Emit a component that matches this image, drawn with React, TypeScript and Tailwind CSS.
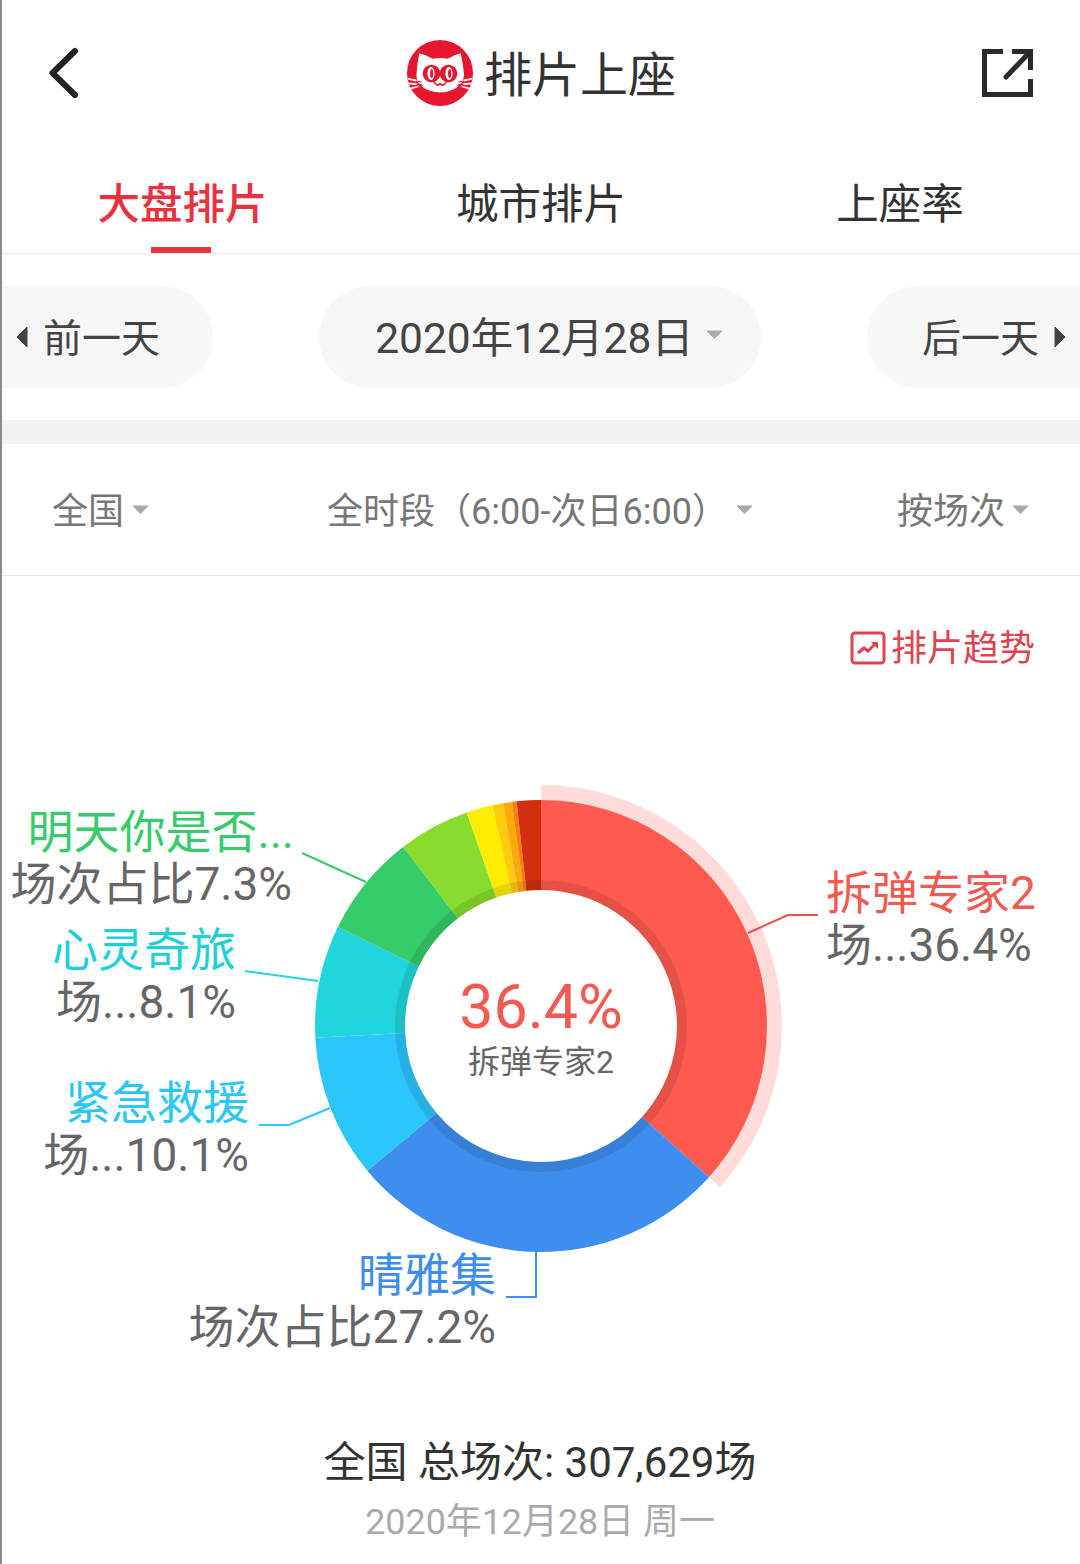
import React from 'react';

const CX = 541;
const CY = 1026;

// share of the ring per film, in degrees from 12 o'clock going clockwise
const segments = [
  { from: 0, to: 132, color: '#ff5a50' },
  { from: 132, to: 230.2, color: '#3e8ef0' },
  { from: 230.2, to: 267, color: '#2ac6fc' },
  { from: 267, to: 296, color: '#20d6dc' },
  { from: 296, to: 322.4, color: '#36cc69' },
  { from: 322.4, to: 340.8, color: '#88dc2c' },
  { from: 340.8, to: 347.6, color: '#ffec00' },
  { from: 347.6, to: 350.3, color: '#ffcb0c' },
  { from: 350.3, to: 352.6, color: '#ffa90a' },
  { from: 352.6, to: 353.8, color: '#fb7f0a' },
  { from: 353.8, to: 360, color: '#d12f0e' },
];

const point = (r: number, deg: number) => {
  const a = (deg * Math.PI) / 180;
  return `${(CX + r * Math.sin(a)).toFixed(2)} ${(CY - r * Math.cos(a)).toFixed(2)}`;
};

const arc = (r0: number, r1: number, from: number, to: number) => {
  const large = to - from > 180 ? 1 : 0;
  return `M${point(r1, from)} A${r1} ${r1} 0 ${large} 1 ${point(r1, to)} L${point(r0, to)} A${r0} ${r0} 0 ${large} 0 ${point(r0, from)} Z`;
};

const Caret = ({ className }: { className: string }) => (
  <svg viewBox="0 0 17 9" className={className}>
    <path d="M1 1h15L8.5 8.5z" fill="currentColor" stroke="currentColor" strokeLinejoin="round" />
  </svg>
);

const CatLogo = () => (
  <svg viewBox="0 0 66 66" className="mb-[3px] h-[66px] w-[66px] shrink-0">
    <circle cx="33" cy="33" r="33" fill="#e8152e" />
    <path d="M12.3 13.3 Q20 15 25.7 18.7 Q33 17.5 40.7 18.7 Q46 15 53.7 13.3 Q56 24 57 34 Q57 41 52 46 Q44 52 33.3 52.5 Q22 52 14 46 Q9 41 9.5 34 Q10 24 12.3 13.3Z" fill="#fff" />
    <circle cx="24.5" cy="33.5" r="8.8" fill="#e8152e" />
    <circle cx="41.5" cy="33.5" r="8.8" fill="#e8152e" />
    <ellipse cx="24" cy="33.5" rx="3.6" ry="6.4" fill="#fff" />
    <ellipse cx="42" cy="33.5" rx="3.6" ry="6.4" fill="#fff" />
    <ellipse cx="24.6" cy="33.5" rx="1.5" ry="4.6" fill="#e8152e" />
    <ellipse cx="42.6" cy="33.5" rx="1.5" ry="4.6" fill="#e8152e" />
    <path d="M27 41.5 Q29.5 47.5 33 43.5 Q36.5 47.5 39.5 41.5" fill="none" stroke="#e8152e" strokeWidth="1.6" />
    <path d="M0.7 38.7 L11 41 M1.3 43.3 L11 44.3 M3.3 48.7 L13 46 M65.3 38.7 L55 41 M64.7 43.3 L55 44.3 M62.7 48.7 L53 46" stroke="#fff" strokeWidth="1.8" />
    <path d="M9 41 L14.5 42 M9.5 44.4 L14.5 44.6 M11 46.5 L15.5 45.3 M57 41 L51.5 42 M56.5 44.4 L51.5 44.6 M55 46.5 L50.5 45.3" stroke="#e8152e" strokeWidth="1.2" />
  </svg>
);

const ChartLabel = ({ className, title, value, color }: { className: string; title: string; value: string; color: string }) => (
  <div className={`absolute text-[46px] whitespace-nowrap ${className}`}>
    <div className={`pt-[1px] leading-[51px] ${color}`}>{title}</div>
    <div className="leading-[52px] text-[#666]">{value}</div>
  </div>
);

export default function App() {
  return (
    <div className="relative h-[1564px] w-[1080px] overflow-hidden bg-white font-['Roboto','Noto_Sans_CJK_SC',sans-serif]">
      {/* Left edge line of the capture */}
      <div className="absolute left-0 top-0 h-full w-[2px] bg-[#8a8a8a]" />

      {/* Header */}
      <header className="flex h-[148px] items-center justify-between pl-[48px] pr-[47px]">
        <div className="flex w-[60px] justify-start">
          <svg viewBox="0 0 32 54" className="h-[54px] w-[32px]">
            <path d="M27 4 L4.5 26 L27 48" fill="none" stroke="#222" strokeWidth="6" strokeLinecap="round" strokeLinejoin="round" />
          </svg>
        </div>
        <div className="ml-[2px] flex items-center gap-[11px]">
          <CatLogo />
          <span className="mt-[4px] text-[48px] leading-none text-[#333]">排片上座</span>
        </div>
        <div className="flex w-[60px] justify-end">
          <svg viewBox="0 0 51 48" className="mb-[2px] h-[48px] w-[51px]">
            <path d="M21 2.5 H2.5 V45.5 H48.5 V30" fill="none" stroke="#2a2a2a" strokeWidth="5" />
            <path d="M30 2.5 H48.5 V21" fill="none" stroke="#2a2a2a" strokeWidth="5" />
            <path d="M24 28 L46 5" fill="none" stroke="#2a2a2a" strokeWidth="5" strokeLinecap="round" />
          </svg>
        </div>
      </header>

      {/* Tabs */}
      <nav className="grid h-[106px] grid-cols-3 border-b border-[#eeeeee]">
        <div className="relative flex items-start justify-center pl-[5px] pt-[32px]">
          <span className="text-[42.5px] font-medium leading-[50px] text-[#e8323f]">大盘排片</span>
          <div className="absolute bottom-0 left-[151px] h-[6px] w-[60px] bg-[#e8323f]" />
        </div>
        <div className="flex items-start justify-center pl-[2px] pt-[32px]">
          <span className="text-[42.5px] leading-[50px] text-[#333]">城市排片</span>
        </div>
        <div className="flex items-start justify-center pt-[32px]">
          <span className="text-[42.5px] leading-[50px] text-[#333]">上座率</span>
        </div>
      </nav>

      {/* Date switcher */}
      <section className="flex h-[166px] items-center justify-between">
        <div className="flex h-[102px] w-[213px] items-center rounded-r-full bg-[#f7f7f7] pl-[16px]">
          <svg viewBox="0 0 12 22" className="h-[22px] w-[12px]">
            <path d="M11 1v20L1 11z" fill="#444" stroke="#444" strokeLinejoin="round" />
          </svg>
          <span className="ml-[15px] mt-[4px] text-[39px] text-[#444]">前一天</span>
        </div>
        <div className="flex h-[102px] w-[442px] items-center justify-center gap-[12px] rounded-full bg-[#f7f7f7] pl-[18px]">
          <span className="mt-[4px] text-[42.5px] text-[#444]">2020年12月28日</span>
          <Caret className="mb-[6px] h-[9px] w-[17px] text-[#aaa]" />
        </div>
        <div className="flex h-[102px] w-[213px] items-center justify-end rounded-l-full bg-[#f7f7f7] pr-[14px]">
          <span className="mr-[15px] mt-[4px] text-[39px] text-[#444]">后一天</span>
          <svg viewBox="0 0 12 22" className="h-[22px] w-[12px]">
            <path d="M1 1v20l10-10z" fill="#444" stroke="#444" strokeLinejoin="round" />
          </svg>
        </div>
      </section>

      <div className="h-[24px] bg-[#f2f2f2]" />

      {/* Filters */}
      <section className="flex h-[132px] items-center justify-between border-b border-[#e8e8e8] pl-[52px] pr-[51px] pt-[5px] text-[36px] text-[#777]">
        <div className="flex items-center gap-[8px]">
          <span>全国</span>
          <Caret className="mb-[5px] h-[9px] w-[17px] text-[#aaa]" />
        </div>
        <div className="ml-[34px] flex items-center gap-[8px]">
          <span>全时段（6:00-次日6:00）</span>
          <Caret className="mb-[5px] h-[9px] w-[17px] text-[#aaa]" />
        </div>
        <div className="flex items-center gap-[7px]">
          <span>按场次</span>
          <Caret className="mb-[5px] h-[9px] w-[17px] text-[#aaa]" />
        </div>
      </section>

      {/* Trend link */}
      <div className="flex h-[124px] items-start justify-end pr-[45px] pt-[49px]">
        <div className="flex items-center gap-[5px] text-[36px] leading-[48px] text-[#e0434f]">
          <svg viewBox="0 0 36 34" className="mb-[3px] h-[34px] w-[36px]">
            <rect x="2" y="2" width="32" height="30" rx="3" fill="none" stroke="#e0434f" strokeWidth="3" />
            <path d="M8 22 L14 17 L18 20 L26 12" fill="none" stroke="#e0434f" strokeWidth="3" />
            <path d="M21 11 H28 V18 Z" fill="#e0434f" />
          </svg>
          <span>排片趋势</span>
        </div>
      </div>

      {/* Donut chart, svg coordinates line up with the page */}
      <div className="relative h-[700px]">
        <svg viewBox="0 700 1080 700" className="block h-[700px] w-[1080px]">
          <path d={arc(226, 241, 0, 132)} fill="#ffdcd9" />
          {segments.map((s) => (
            <path key={s.from} d={arc(136, 226, s.from, s.to)} fill={s.color} />
          ))}
          <circle cx={CX} cy={CY} r="141" fill="none" stroke="#000" strokeOpacity="0.1" strokeWidth="10" />
          <path d="M302 853 L366 882" fill="none" stroke="#36cc69" strokeWidth="2" />
          <path d="M245 971 L318 981" fill="none" stroke="#20d6dc" strokeWidth="2" />
          <path d="M259 1125 H289 L330 1108" fill="none" stroke="#2ac6fc" strokeWidth="2" />
          <path d="M506 1297 H536 V1252" fill="none" stroke="#3e8ef0" strokeWidth="2" />
          <path d="M748 933 L788 915 H818" fill="none" stroke="#e8504a" strokeWidth="2" />
        </svg>

        <div className="absolute left-[341px] top-[272px] flex w-[400px] flex-col items-center">
          <span className="text-[61px] leading-[70px] text-[#f25a52]">36.4%</span>
          <span className="text-[32px] leading-[40px] text-[#666]">拆弹专家2</span>
        </div>

        <ChartLabel className="right-[788px] top-[106px] text-right" title="明天你是否..." value="场次占比7.3%" color="mr-[-2px] text-[#36cc69]" />
        <ChartLabel className="right-[844px] top-[224px] text-right" title="心灵奇旅" value="场...8.1%" color="text-[#20d0d8]" />
        <ChartLabel className="right-[831px] top-[377px] text-right" title="紧急救援" value="场...10.1%" color="text-[#2ac6fc]" />
        <ChartLabel className="right-[584px] top-[549px] text-right" title="晴雅集" value="场次占比27.2%" color="text-[#3e8ef0]" />
        <ChartLabel className="left-[826px] top-[167px]" title="拆弹专家2" value="场...36.4%" color="text-[#f25a52]" />
      </div>

      {/* Totals */}
      <footer className="flex flex-col items-center pt-[38px]">
        <div className="text-[42px] leading-[50px] text-[#333]">全国 总场次: 307,629场</div>
        <div className="mt-[9px] text-[35.9px] leading-[50px] text-[#aaa]">2020年12月28日 周一</div>
      </footer>
    </div>
  );
}
